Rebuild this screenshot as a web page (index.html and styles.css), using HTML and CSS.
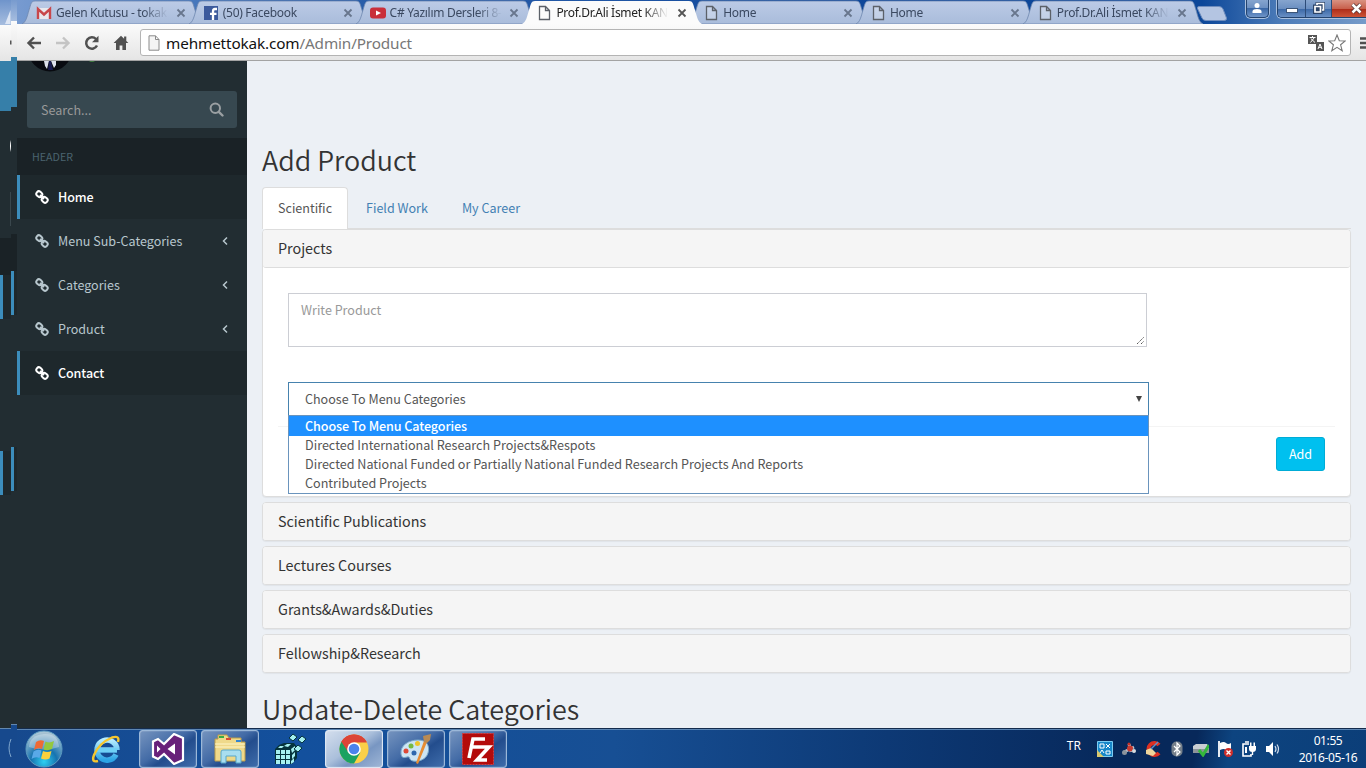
FILE: index.html
```html
<!DOCTYPE html>
<html lang="en">
<head>
<meta charset="utf-8">
<title>Add Product</title>
<link rel="stylesheet" href="styles.css">
</head>
<body>
<svg class="defs" width="0" height="0">
  <defs>
    <linearGradient id="tabFill" x1="0" y1="0" x2="0" y2="1"><stop offset="0" stop-color="#bccbe6"/><stop offset="1" stop-color="#a9bcdb"/></linearGradient>
    <radialGradient id="orb" cx=".5" cy=".85" r=".8"><stop offset="0" stop-color="#2fd0f2"/><stop offset=".45" stop-color="#1673b0"/><stop offset="1" stop-color="#a9c4d4"/></radialGradient>
    <linearGradient id="ie" x1="0" y1="0" x2="0" y2="1"><stop offset="0" stop-color="#b5ecff"/><stop offset="1" stop-color="#2ba4e6"/></linearGradient>
    <symbol id="tab" viewBox="0 0 180 24"><path d="M0 24C4 22 5 17 7 10C9 4 9 1 13 1H167C171 1 171 4 173 10C175 17 176 22 180 24Z"/></symbol>
    <symbol id="doc" viewBox="0 0 16 16"><path d="M3.5 1.5h6l4 4v9h-10zM9.500 1.500v4h4" fill="#fff" fill-opacity=".25" stroke="#5c6169" stroke-width="1.3"/></symbol>
    <symbol id="x" viewBox="0 0 10 10"><path d="M1.500 1.500l7 7M8.500 1.500l-7 7" stroke="currentColor" stroke-width="1.8"/></symbol>
    <symbol id="link" viewBox="0 0 14 14"><g fill="none" stroke="currentColor" stroke-width="2"><rect x="1.300" y="1.700" width="6" height="5" rx="2.300" transform="rotate(40 4.300 4.200)"/><rect x="6.700" y="7.300" width="6" height="5" rx="2.300" transform="rotate(40 9.700 9.800)"/><path d="M5 5l4 4"/></g></symbol>
    <symbol id="left" viewBox="0 0 8 10"><path d="M6 1.500L2.500 5L6 8.500" fill="none" stroke="currentColor" stroke-width="1.500"/></symbol>
  </defs>
</svg>

<header class="tabstrip">
  <div class="tab"><svg class="shape"><use href="#tab"/></svg><svg class="fav" viewBox="0 0 16 16"><path d="M1 3h14v11H1z" fill="#e8e8ee"/><path d="M2 14V4l6 5.500L14 4v10" fill="none" stroke="#c8474b" stroke-width="2.400"/></svg><span class="label">Gelen Kutusu - tokak</span><svg class="close"><use href="#x"/></svg></div>
  <div class="tab"><svg class="shape"><use href="#tab"/></svg><svg class="fav" viewBox="0 0 16 16"><path d="M1 1h14v14H1z" fill="#3c5a9c"/><path d="M10 15V8.500M14 4h-2q-2 0-2 2.500V8M7 8.800h6.500" fill="none" stroke="#fff" stroke-width="2.300"/></svg><span class="label">(50) Facebook</span><svg class="close"><use href="#x"/></svg></div>
  <div class="tab"><svg class="shape"><use href="#tab"/></svg><svg class="fav" viewBox="0 0 16 16"><rect y="2.500" width="16" height="11" rx="3" fill="#c92f3a"/><path d="M6 5.500v5l5-2.500z" fill="#fff"/></svg><span class="label">C# Yazılım Dersleri 8-</span><svg class="close"><use href="#x"/></svg></div>
  <div class="tab active"><svg class="shape"><use href="#tab"/></svg><svg class="fav"><use href="#doc"/></svg><span class="label">Prof.Dr.Ali İsmet KAN</span><svg class="close"><use href="#x"/></svg></div>
  <div class="tab"><svg class="shape"><use href="#tab"/></svg><svg class="fav"><use href="#doc"/></svg><span class="label">Home</span><svg class="close"><use href="#x"/></svg></div>
  <div class="tab"><svg class="shape"><use href="#tab"/></svg><svg class="fav"><use href="#doc"/></svg><span class="label">Home</span><svg class="close"><use href="#x"/></svg></div>
  <div class="tab"><svg class="shape"><use href="#tab"/></svg><svg class="fav"><use href="#doc"/></svg><span class="label">Prof.Dr.Ali İsmet KAN</span><svg class="close"><use href="#x"/></svg></div>
  <svg class="newtab" viewBox="0 0 32 16"><path d="M3 .5H23Q26 .5 27 3L30.500 12Q31 14.500 28 14.500H10Q7 14.500 6 12L1.500 2.500Q1 .5 3 .5z" fill="#b4c5e2" stroke="#6f8dbd"/></svg>
  <div class="wbtn user"><svg width="12" height="12" viewBox="0 0 12 12"><circle cx="6" cy="3.500" r="2.500" fill="#fff"/><path d="M1.500 11V9Q2 7 6 7t4.500 2v2z" fill="#fff"/></svg></div>
  <div class="wgroup">
    <div class="wbtn min"><i></i></div>
    <div class="wbtn max"><svg width="12" height="12" viewBox="0 0 12 12"><path d="M4 3V1.500h6.500V8H9M1.500 4H8v6.500H1.500zM4 6.300h1.500v1.500H4z" fill="none" stroke="#2c4468" stroke-width="3"/><path d="M4 3V1.500h6.500V8H9M2 4.500h5.500V10H2z" fill="none" stroke="#fff" stroke-width="1.700"/></svg></div>
    <div class="wbtn cls"><svg width="13" height="11" viewBox="0 0 13 11"><path d="M2.500 1.500l8 8M10.500 1.500l-8 8" stroke="#533" stroke-width="4"/><path d="M2.500 1.500l8 8M10.500 1.500l-8 8" stroke="#fff" stroke-width="2.500"/></svg></div>
  </div>
</header>

<div class="toolbar">
  <svg class="nav" viewBox="0 0 16 16"><path d="M15 8H3M8 2.500L2.500 8L8 13.500" fill="none" stroke="#505050" stroke-width="2.400"/></svg>
  <svg class="nav" viewBox="0 0 16 16"><path d="M1 8h12M8 2.500L13.500 8L8 13.500" fill="none" stroke="#c4c4c4" stroke-width="2.400"/></svg>
  <svg class="nav" viewBox="0 0 16 16"><path d="M13 10.500A5.700 5.700 0 1 1 12 4" fill="none" stroke="#505050" stroke-width="2.500"/><path d="M14.500 .8v6.500H8z" fill="#505050"/></svg>
  <svg class="nav" viewBox="0 0 16 16"><path d="M8 .8L.6 8H3v7h3.600v-4.500h2.800V15H13V8h2.400L13.300 6V1.500h-2.200v2.300z" fill="#505050"/></svg>
  <div class="omnibox">
    <svg class="page" viewBox="0 0 12 16"><path d="M1 .8h6.500L11 4.500v10.700H1zM7.500 .8v3.700H11" fill="#f4f4f4" stroke="#8a8a8a"/></svg>
    <span class="url">mehmettokak.com<em>/Admin/Product</em></span>
    <svg class="translate" viewBox="0 0 16 16"><path d="M0 0h9v9H0zM8 7h8v9H8z" fill="#555"/><path d="M1.500 2.500h6M4.500 1v1.500M2.500 7.500L6 3M2.800 3.500L7 7.500M10 14l2-5 2 5M10.800 12.300h2.500" fill="none" stroke="#fff"/></svg>
    <svg class="star" viewBox="0 0 18 18"><path d="M9 1l2.300 5.700 5.900.3-4.600 3.800 1.600 5.900L9 13.400l-5.200 3.300 1.600-5.900L.8 7l5.900-.3z" fill="#fff" stroke="#777" stroke-width="1.100"/></svg>
  </div>
  <svg class="menu" viewBox="0 0 14 12"><path d="M1 1.500h13M1 6h13M1 10.500h13" stroke="#505050" stroke-width="2.600"/></svg>
</div>

<div class="app">
  <aside class="sidebar">
    <div class="profile"><svg width="70" height="12" viewBox="0 0 70 12"><circle cx="33" cy="-11.500" r="22" fill="#080a10"/><path d="M27 0l1 5 2 3 2-8zM34 0l3 7 2-3V0z" fill="#dde1ec"/><path d="M32 0h2l2 9h-5z" fill="#171a50"/></svg><i class="online"></i></div>
    <div class="search"><span>Search...</span><svg width="15" height="15" viewBox="0 0 15 15"><circle cx="6.300" cy="6.300" r="4.700" fill="none" stroke="#9a9fa2" stroke-width="2"/><path d="M9.800 9.800l3.700 3.700" stroke="#9a9fa2" stroke-width="2.400" stroke-linecap="round"/></svg></div>
    <div class="sidehead">HEADER</div>
    <nav>
      <a class="item on"><svg><use href="#link"/></svg><span>Home</span></a>
      <a class="item"><svg><use href="#link"/></svg><span>Menu Sub-Categories</span><svg class="caret"><use href="#left"/></svg></a>
      <a class="item"><svg><use href="#link"/></svg><span>Categories</span><svg class="caret"><use href="#left"/></svg></a>
      <a class="item"><svg><use href="#link"/></svg><span>Product</span><svg class="caret"><use href="#left"/></svg></a>
      <a class="item on"><svg><use href="#link"/></svg><span>Contact</span></a>
    </nav>
  </aside>
  <main class="content">
    <h2>Add Product</h2>
    <ul class="pills"><li class="current">Scientific</li><li class="p2">Field Work</li><li class="p3">My Career</li></ul>
    <section class="panel open">
      <h4>Projects</h4>
      <div class="body">
        <div class="area">Write Product<svg width="9" height="9" viewBox="0 0 9 9"><path d="M1 8l7-7M5 8l3-3" stroke="#555" stroke-dasharray="1.400 .6"/></svg></div>
        <div class="select"><span>Choose To Menu Categories</span><i></i>
          <ul class="options"><li class="sel">Choose To Menu Categories</li><li>Directed International Research Projects&amp;Respots</li><li class="long">Directed National Funded or Partially National Funded Research Projects And Reports</li><li>Contributed Projects</li></ul>
        </div>
        <div class="footer"><button>Add</button></div>
      </div>
    </section>
    <section class="panel"><h4>Scientific Publications</h4></section>
    <section class="panel"><h4>Lectures Courses</h4></section>
    <section class="panel"><h4>Grants&amp;Awards&amp;Duties</h4></section>
    <section class="panel"><h4>Fellowship&amp;Research</h4></section>
    <h2 class="second">Update-Delete Categories</h2>
  </main>
</div>

<footer class="taskbar">
  <svg class="start" width="38" height="38" viewBox="0 0 38 38"><circle cx="19" cy="19" r="18" fill="url(#orb)" stroke="#5d9bc0"/><path d="M4 17Q5 5 19 4T34 17Q19 22 4 17z" fill="#fff" opacity=".3"/><path d="M11 12q4-3 8-1l-2 8q-4-2-8 1z" fill="#ef6a35"/><path d="M20.500 11.500q4 2 8.500-.5l-2 8q-4 2-8.500.5z" fill="#94c83e"/><path d="M8.500 21.500q4-3 8-1l-2 7.500q-4-2-8 1z" fill="#59a9e8"/><path d="M18 21q4 2 8.500 0l-2 7.500q-4 2-8.500 0z" fill="#fbd03c"/></svg>
  <svg class="iexp" width="32" height="32" viewBox="0 0 32 32"><path d="M8 17h19M26 21.500A10 10 0 1 1 27 17" fill="none" stroke="url(#ie)" stroke-width="5.500"/><path d="M6.500 17h20" stroke="#6fd0f6" stroke-width="4"/><path d="M28 9Q30 2 22 4.500Q9 10 4 22Q1 30 8 28" fill="none" stroke="#f5c62f" stroke-width="2.400"/></svg>
  <div class="task"><svg width="34" height="32" viewBox="0 0 34 32"><path d="M23 1l9 4v22l-9 4L13 21l-6 5-5-2.500V8.500L7 6l6 5z" fill="#68217a" stroke="#fff" stroke-width="2.200"/><path d="M24 10.500v11L16.500 16zM6 12.500v7L9.500 16z" fill="#fff"/></svg></div>
  <div class="task"><svg width="34" height="32" viewBox="0 0 34 32"><path d="M2 6h3V2h9l2 3h12v4h4v19H2z" fill="#efd98a" stroke="#bc9d48"/><path d="M6 3h5v2H6z" fill="#37ad45"/><path d="M13 5h5v2h-5z" fill="#d94a32"/><path d="M23 7h5v2h-5z" fill="#3485cf"/><path d="M2 11h30M2 14h30" stroke="#fff6c9"/><path d="M8 30V19q0-2 2-2h16q2 0 2 2v11h-5v-7H13v7z" fill="#a9def0" stroke="#57a7cb"/></svg></div>
  <svg class="reg" width="32" height="32" viewBox="0 0 32 32"><path d="M0 16l4-4 5-2h10l3 4v11l-5 6H0z" fill="#05333c"/><path d="M1 17h4v4H1zM6 17h4v4H6zM11 17h4v4h-4zM1 22h4v4H1zM6 22h4v4H6zM11 22h4v4h-4zM1 27h4v4H1zM6 27h4v4H6zM11 27h4v4h-4zM3 15l2-2h4l-2 2zM9 13l3-2h4l-3 3zM16 16l4-3v4l-3 3zM17 22l3-3v4l-3 3zM16 28l3-3v4l-3 2z" fill="#a5f0f0"/><path d="M18 1l4 3-4 4-4-3zM27 3l4 3-4 4-4-3zM23 12l4 3-4 4-4-3z" fill="#a5f0f0" stroke="#05333c"/></svg>
  <div class="task lit"><svg width="30" height="30" viewBox="0 0 30 30"><circle cx="15" cy="15" r="14.500" fill="#fbd049"/><path d="M15 15L2.400 7.750A14.500 14.500 0 0 1 27.600 7.750H15z" fill="#dc4437"/><path d="M15 15L2.400 7.750A14.500 14.500 0 0 0 15 29.500L21.300 18.600z" fill="#1ba261"/><path d="M15 8.500h12.900L27.500 7.750A14.500 14.500 0 0 0 2.400 7.750L9.400 18.250z" fill="#dc4437"/><circle cx="15" cy="15" r="6.800" fill="#fff"/><circle cx="15" cy="15" r="5.300" fill="#4a83ec"/></svg></div>
  <div class="task"><svg width="34" height="32" viewBox="0 0 34 32"><path d="M2 21C1 12 10 7 19 7s12 6 10 13-10 9-15 8-2-5-6-4-5 1-6-3z" fill="#cde5f4" stroke="#7ba9c9"/><circle cx="7" cy="18" r="2.500" fill="#de4937"/><circle cx="12" cy="13" r="2.500" fill="#76b943"/><circle cx="18.500" cy="10.500" r="2.500" fill="#edc52c"/><circle cx="15" cy="20" r="2.500" fill="#2e68ae"/><path d="M17 30l8-22 3 1-9 22z" fill="#e78d33"/><path d="M25 9l-1-6 8-2-1 6-3 3z" fill="#b98a53"/></svg></div>
  <div class="task"><svg width="32" height="32" viewBox="0 0 32 32"><path d="M.5 .5h31v31H.5z" fill="#b30b0b" stroke="#d83b3b" stroke-dasharray="2 1"/><path d="M7 25L11 6h12M9.500 14H19M18 14h9L15 27h10" fill="none" stroke="#fff" stroke-width="3.600"/></svg></div>
  <span class="lang">TR</span>
  <div class="tray">
    <svg viewBox="0 0 16 16"><path d="M.5 .5h15v15H.5z" fill="#1787c9" stroke="#7ccdf2"/><path d="M3 3h4v4H3zM9 3l4 4M13 3L9 7M3 12l2-3 2 3M9 10h4v3H9z" fill="none" stroke="#fff"/><path d="M0 9l7 7H0z" fill="#d9c86f"/></svg>
    <svg viewBox="0 0 16 16"><path d="M3 11l10-5M8 3l2 8" stroke="#bcc5d0" stroke-width="3"/><circle cx="3.500" cy="11.500" r="2.500" fill="#8b939c"/><circle cx="9" cy="7.500" r="3" fill="#c63b31"/><circle cx="13" cy="10" r="2" fill="#d9dde0"/><circle cx="8" cy="3" r="1.500" fill="#c7332a"/></svg>
    <svg viewBox="0 0 16 16"><path d="M14 4A6 6 0 1 0 14 12" fill="none" stroke="#dc3022" stroke-width="4"/><path d="M1 9l5-2 5 5-3 3-7-2z" fill="#edd49b"/><path d="M6 8L13 1" stroke="#5a8fca" stroke-width="1.500"/></svg>
    <svg viewBox="0 0 16 16"><rect x="2.500" y=".5" width="11" height="15" rx="5" fill="#747e89"/><path d="M5 5l6 6-3 3V2l3 3-6 6" fill="none" stroke="#fff" stroke-width="1.200"/></svg>
    <svg viewBox="0 0 16 16"><path d="M0 5l3-2h11l2 3v5H0z" fill="#c9ced2"/><path d="M0 8h16v4H0z" fill="#8c949a"/><path d="M6 9l4 5 6-10" fill="none" stroke="#35b83c" stroke-width="3"/></svg>
    <svg viewBox="0 0 16 16"><path d="M2 0v16" stroke="#fff" stroke-width="1.800"/><path d="M3 2q4-2 6 0t5 0v7q-3 2-5 0T3 9z" fill="#fff"/><circle cx="11.500" cy="11.500" r="4.500" fill="#d12e2a"/><path d="M9.500 9.500l4 4M13.500 9.500l-4 4" stroke="#fff" stroke-width="1.400"/></svg>
    <svg viewBox="0 0 16 16"><path d="M8 3H2v12h8v-2M4 1h4" fill="none" stroke="#fff" stroke-width="1.600"/><path d="M4 6h2v6H4zM8 5h7v3q0 3-3.500 3T8 8zM9 1.500h1.500V5H9zM12.500 1.500H14V5h-1.500z" fill="#fff"/><path d="M11.500 10v4" stroke="#fff" stroke-width="1.400"/></svg>
    <svg viewBox="0 0 16 16"><path d="M1 5h3l4-4v14l-4-4H1z" fill="#fff"/><path d="M10 5q2 3 0 6M12 3.500q3 4.500 0 9" fill="none" stroke="#cfdcec" stroke-width="1.200"/></svg>
  </div>
  <div class="clock"><span>01:55</span><span>2016-05-16</span></div>
</footer>

<div class="sliver outer"><i class="s-top"></i><i class="s-bar"></i><i class="s-blue"></i><i class="s-dark"></i><i class="s-head"></i><i class="s-m"></i><i class="s-dark2"></i><i class="s-m"></i><i class="s-rest"></i><i class="s-task"></i></div>
<div class="sliver inner"><i class="s-top"></i><i class="s-bar"></i><i class="s-blue"></i><i class="s-dark"></i><i class="s-head"></i><i class="s-m"></i><i class="s-dark2"></i><i class="s-m"></i><i class="s-rest"></i><i class="s-task"></i></div>
<svg class="edges" width="18" height="768" viewBox="0 0 18 768"><path d="M5 24L10.500 10V24z" fill="#dce5f4"/><path d="M10 40.500h1.500v4H10z" fill="#555"/><path d="M11 140q-2 6 0 12z" fill="#fff"/><path d="M10.500 192v34" stroke="#3a474d"/><path d="M11 739q-4 9 0 18" fill="none" stroke="#7fa6cc"/></svg>
</body>
</html>
```
FILE: styles.css
```css
* { box-sizing: border-box; }
body { margin: 0; width: 1366px; height: 768px; overflow: hidden; position: relative; display: flex; flex-direction: column; font-family: "Noto Sans CJK SC", sans-serif; font-size: 12.55px; color: #555; }
ul, h2, h4 { margin: 0; padding: 0; list-style: none; font-weight: 400; }
svg { display: block; flex: none; }
.defs { position: absolute; }

.tabstrip { flex: none; height: 24px; display: flex; padding-left: 22px; background: linear-gradient(90deg, #7c9ed2 0, #4c7cc0 12%, #2a5ea9 25%, #1f55a4 45%, #0e479a 60%, #0c4799 88%, #4e7db9 94%, #769bc9 100%); font-family: "Noto Sans", sans-serif; font-size: 12px; color: #3b4961; }
.tab { position: relative; flex: none; width: 166.8px; height: 24px; display: flex; align-items: center; padding: 2px 3px 0 14px; }
.tab .shape { position: absolute; left: 0; top: 0; width: 180px; height: 24px; fill: url(#tabFill); stroke: #6d86ae; stroke-width: .8; }
.tab.active { z-index: 2; color: #222; padding-right: 2px; }
.tab.active .shape { fill: #fbfbfb; stroke: none; }
.fav { position: relative; width: 16px; height: 16px; margin-right: 4px; }
.label { position: relative; width: 112px; overflow: hidden; white-space: nowrap; line-height: 18px; letter-spacing: -.3px; -webkit-mask-image: linear-gradient(90deg, #000 78%, transparent 100%); mask-image: linear-gradient(90deg, #000 78%, transparent 100%); }
.close { position: relative; width: 10px; height: 10px; margin-left: auto; color: #68768d; }
.tab.active .close { color: #555; }
.newtab { width: 32px; height: 16px; margin: 6px 0 0 6px; }
.wbtn { display: flex; align-items: center; justify-content: center; height: 18px; padding-bottom: 2px; background: linear-gradient(#86a5ce 0, #6b8fc1 48%, #3b68a6 50%, #6f95c9 100%); }
.user { width: 24px; margin-left: 18px; border: 1px solid #24446f; border-top: 0; border-radius: 0 0 5px 5px; box-shadow: 0 0 0 1px #a9c0df; }
.wgroup { display: flex; margin-left: 8px; width: 90px; height: 18px; border: 1px solid #24446f; border-width: 0 0 1px 1px; border-radius: 0 0 0 5px; overflow: hidden; box-shadow: 0 0 0 1px #a9c0df; }
.min { width: 28px; border-right: 1px solid #2d4c78; }
.min i { width: 12px; height: 5px; margin-top: 4px; background: #fff; border: 1px solid #3c5578; }
.max { width: 26px; border-right: 1px solid #2d4c78; }
.cls { flex: 1; padding-left: 14px; background: linear-gradient(#d99282 0, #c8604c 48%, #ad2c19 50%, #d0583b 100%); }

.toolbar { flex: none; height: 37px; display: flex; align-items: center; padding: 1px 0 0 26px; gap: 13px; background: linear-gradient(#fbfbfb, #e5e5e5); border-bottom: 1px solid #a3a3a3; }
.nav { width: 16px; height: 16px; }
.omnibox { flex: none; width: 1211px; height: 27px; margin-left: -2px; display: flex; align-items: center; padding: 0 4px 0 7px; background: #fff; border: 1px solid #b4b4b4; border-radius: 3px; font-family: "Noto Sans", sans-serif; font-size: 15.3px; color: #111; }
.page { width: 12px; height: 16px; }
.url { margin-left: 6px; flex: 1; line-height: 20px; letter-spacing: -.14px; }
.url em { font-style: normal; color: #777; }
.translate { width: 16px; height: 16px; margin-right: 4px; }
.star { width: 18px; height: 18px; }
.menu { width: 14px; height: 12px; margin-left: -5px; }

.app { flex: none; height: 667px; display: flex; padding-left: 17px; background: #222d32; overflow: hidden; }
.sidebar { width: 230px; flex: none; color: #b8c7ce; }
.profile { height: 30px; position: relative; }
.online { position: absolute; left: 72px; top: -3px; width: 6px; height: 4px; border-radius: 3px; background: #3c763d; }
.search { margin: 0 10px; height: 37px; border-radius: 3px; background: #374850; display: flex; align-items: center; justify-content: space-between; padding: 0 13px 0 14px; color: #999; }
.sidehead { margin-top: 10px; height: 37px; line-height: 37px; padding-left: 15px; background: #1a2226; color: #4b646f; font-size: 10.7px; }
.item { height: 44px; display: flex; align-items: center; padding: 0 18px 0 15px; border-left: 3px solid transparent; }
.item span { padding-bottom: 2px; }
.item svg { width: 14px; height: 14px; margin-right: 9px; }
.item .caret { width: 8px; height: 10px; margin: 0 0 0 auto; }
.on { background: #1e282c; border-color: #3c8dbc; color: #fff; font-weight: 500; }
.on span { letter-spacing: -.1px; }

.content { width: 1119px; flex: none; background: #ecf0f5; padding: 79px 15px 0; overflow: hidden; }
h2 { height: 40px; line-height: 40px; font-size: 26.9px; font-weight: 350; color: #333; }
.pills { margin-top: 7px; display: flex; height: 42px; border-bottom: 1px solid #ddd; line-height: 41px; color: #4380b3; }
.pills li { padding: 0 16px; margin-right: 2px; }
.pills .current { height: 42px; width: 86px; padding: 0 15px; line-height: 39px; background: #fff; border: 1px solid #ddd; border-bottom: 0; border-radius: 4px 4px 0 0; color: #555; }
.panel { height: 39px; margin-bottom: 5px; background: #fff; border: 1px solid #ddd; border-radius: 4px; box-shadow: 0 1px 1px rgba(0,0,0,.05); }
.panel.open { height: 268px; }
h4 { height: 37px; line-height: 35px; padding-left: 15px; background: #f5f5f5; border-radius: 3px; font-size: 14.35px; font-weight: 400; color: #333; }
.open h4 { height: 38px; border-bottom: 1px solid #ddd; }
.body { padding: 25px 15px 0; }
.area { position: relative; margin-left: 10px; width: 859px; height: 54px; border: 1px solid #ccced4; padding: 6px 12px; line-height: 20px; color: #999; }
.area svg { position: absolute; right: 1px; bottom: 1px; }
.select { position: relative; margin: 35px 0 0 10px; width: 861px; height: 34px; border: 1px solid #4682ae; padding: 0 6px 0 16px; display: flex; align-items: center; justify-content: space-between; }
.select > span { padding-bottom: 2px; }
.select > i { border: 3px solid transparent; border-top: 6px solid #444; border-bottom: 0; }
.options { position: absolute; left: -1px; top: 32px; width: 861px; height: 79px; border: 1px solid #6a94bd; background: #fff; font-size: 12.6px; }
.options li { height: 19px; line-height: 17px; padding-left: 16px; white-space: nowrap; }
.options .sel { background: #1e90ff; color: #fff; height: 20px; line-height: 19px; font-weight: 500; letter-spacing: -.1px; }
.footer { margin-top: 10px; height: 62px; border-top: 1px solid #f4f4f4; display: flex; justify-content: flex-end; padding: 10px 10px 0 0; }
button { width: 49px; height: 34px; padding: 0 0 2px; background: #00c0ef; border: 1px solid #00acd6; border-radius: 3px; color: #fff; font: inherit; }
.second { margin-top: 16px; }

.taskbar { flex: none; height: 40px; display: flex; align-items: center; padding-left: 25px; background: linear-gradient(100deg, transparent 0 1180px, #0d4480 1215px, #0b3c76 1400px), linear-gradient(90deg, #17498d 0, #13509d 22%, #174f94 45%, #0d3975 65%, #07285a 82%, #07285a 100%); border-top: 1px solid #142c4d; box-shadow: inset 0 1px #5c86b4; font-family: "Noto Sans", sans-serif; color: #fff; font-size: 12px; }
.iexp { margin: 0 17px 0 27px; }
.task { flex: none; width: 58px; height: 38px; margin-right: 4px; display: flex; align-items: center; justify-content: center; border: 1px solid #9bb8d9; border-radius: 3px; background: linear-gradient(145deg, #7594bf 0, #436ba6 45%, #234d8d 60%, #3f6dab 100%); box-shadow: inset 0 0 1px #fff; }
.lit { background: linear-gradient(145deg, #d3deed 0, #aabfdb 45%, #7896c2 65%, #9fb6d6 100%); border-color: #dce6f3; }
.reg { margin: 0 18px 0 12px; }
.lang { margin-left: auto; margin-bottom: 7px; }
.tray { display: flex; gap: 8px; margin: 1px 0 0 16px; }
.tray svg { width: 16px; height: 16px; }
.clock { width: 76px; margin: 1px 0 0 9px; text-align: center; display: flex; flex-direction: column; line-height: 17px; letter-spacing: -.4px; }

.sliver { position: absolute; left: 0; top: 0; height: 768px; display: flex; flex-direction: column; z-index: 5; }
.sliver i { flex: none; display: block; }
.outer { width: 11px; }
.inner { left: 11px; width: 6px; top: -4px; height: 772px; }
.s-top { height: 25px; background: linear-gradient(#6f94cb, #a6bddf); }
.s-bar { height: 36px; background: linear-gradient(#fbfbfb, #e5e5e5); }
.s-blue { height: 50px; background: #367fa9; }
.s-dark { height: 127px; background: #222d32; }
.s-head { height: 37px; background: #1a2226; }
.s-m { height: 44px; background: linear-gradient(90deg, #3c8dbc 3px, #1e282c 3px); }
.s-dark2 { height: 132px; background: #222d32; }
.s-rest { height: 233px; background: #222d32; }
.s-task { flex: 1 !important; background: #17498d; border-top: 1px solid #6287b0; }
.edges { position: absolute; left: 0; top: 0; z-index: 6; }
```
